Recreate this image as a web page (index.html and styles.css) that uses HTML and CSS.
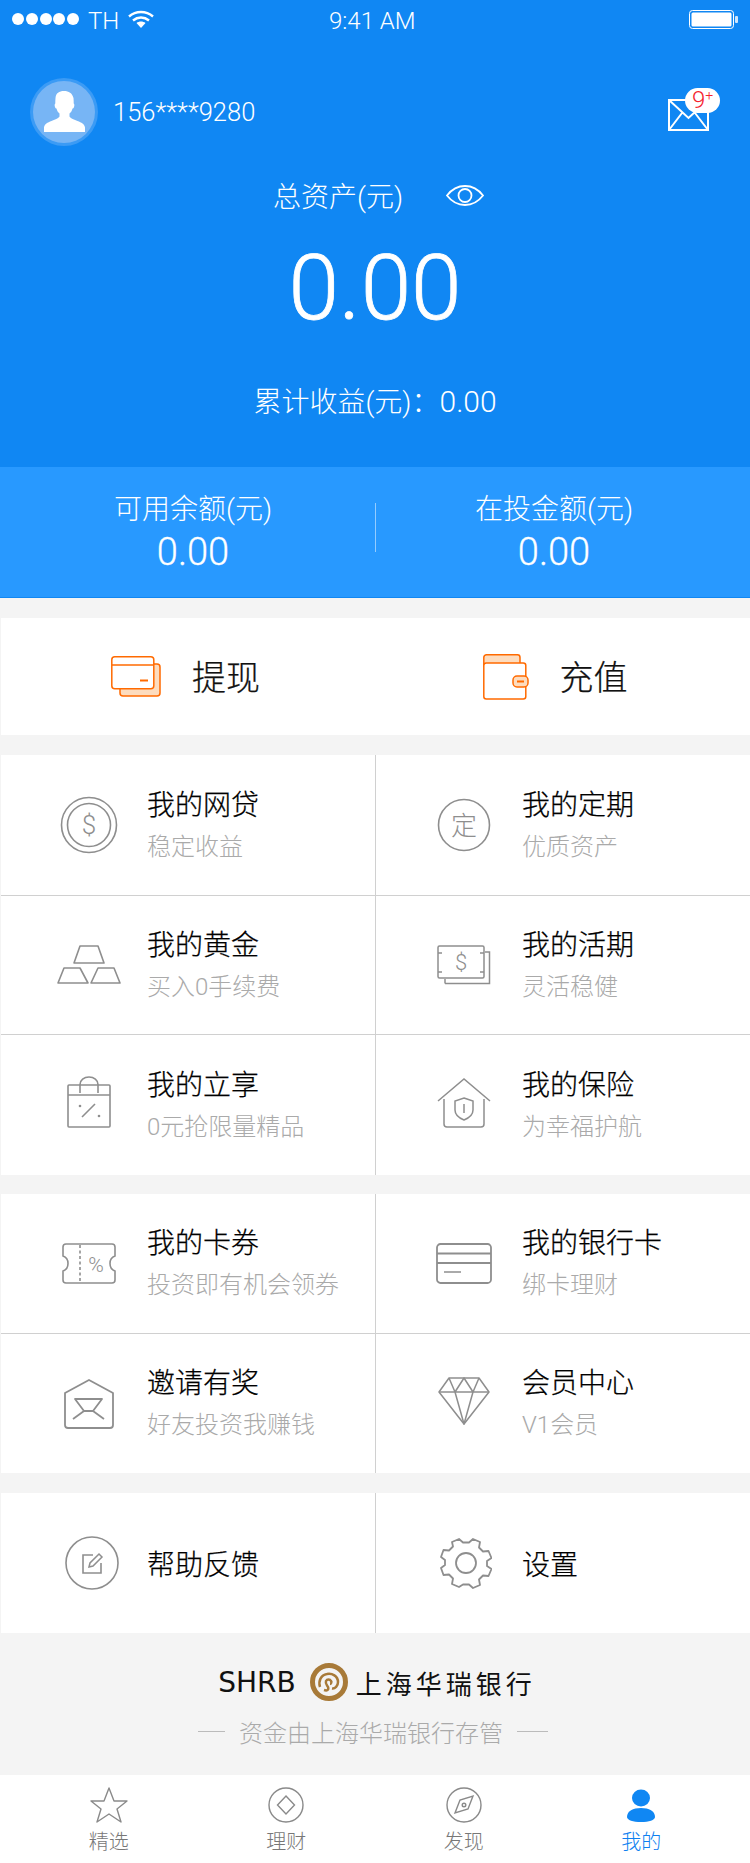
FILE: index.html
```html
<!DOCTYPE html>
<html lang="zh-CN">
<head>
    <meta charset="UTF-8">
    <title>我的</title>
    <link rel="stylesheet" href="styles.css">
</head>
<body>
<div class="page">
    <div class="top">
        <div class="status">
            <div class="status-left">
                <span class="dots"><i></i><i></i><i></i><i></i><i></i></span>
                <span class="carrier">TH</span>
                <svg class="wifi" width="26" height="18" viewBox="0 0 26 18" fill="none" stroke="#fff" stroke-width="2.400">
                    <path d="M1 6.500C8 .5 18 .5 25 6.500"/>
                    <path d="M5 10.500c4.800-4 11.200-4 16 0"/>
                    <path d="M13 18l-4.500-5c2.600-2 6.400-2 9 0z" fill="#fff" stroke="none"/>
                </svg>
            </div>
            <span class="clock">9:41 AM</span>
            <svg class="battery" width="49" height="19" viewBox="0 0 49 19" fill="none">
                <rect x=".5" y=".5" width="44" height="18" rx="3" stroke="#fff"/>
                <rect x="2.500" y="2.500" width="40" height="14" rx="1.500" fill="#fff"/>
                <rect x="46" y="6" width="3" height="7" rx="1" fill="#cfe5fb"/>
            </svg>
        </div>
        <div class="user">
            <div class="user-info">
                <svg width="68" height="68" viewBox="0 0 68 68">
                    <circle cx="34" cy="34" r="34" fill="#3b9bf5"/>
                    <circle cx="34" cy="34" r="31" fill="#77b5f5"/>
                    <path d="M34 13c-5 0-8 2-8.500 7-.2 2-.2 4-.2 5.500-.8.500-.8 2-.3 3.500.3 1 1 1.500 1.500 1.500.5 2 1.500 4 3 5v3c-1 2-5 3-8 4.500-4 1.500-7 3-7.500 6.500V54h41v-4.500c-.5-3.500-3.500-5-7.500-6.500-3-1.500-7-2.500-8-4.500v-3c1.500-1 2.500-3 3-5 .5 0 1.200-.5 1.500-1.500.5-1.500.5-3-.3-3.500 0-1.500 0-3.500-.2-5.500C42 15 39 13 34 13z" fill="#fff"/>
                </svg>
                <span class="phone">156****9280</span>
            </div>
            <div class="mail">
                <svg width="41" height="32" viewBox="0 0 41 32" fill="none" stroke="#fff" stroke-width="2">
                    <rect x="1" y="1" width="39" height="30"/>
                    <path d="M1 1l19.500 18L40 1M1 31l13-17M40 31L27 14"/>
                </svg>
                <span class="mail-badge">9<sup>+</sup></span>
            </div>
        </div>
        <div class="total-label">
            <span>总资产(元)</span>
            <svg width="38" height="21" viewBox="0 0 38 21" fill="none" stroke="#fff" stroke-width="1.800">
                <path d="M1 10.500C6 4 12 1 19 1s13 3 18 9.500C32 17 26 20 19 20S6 17 1 10.500z"/>
                <circle cx="19" cy="10.500" r="6.500"/>
            </svg>
        </div>
        <div class="total-num">0.00</div>
        <div class="total-sum">累计收益(元)&#65306;<span>0.00</span></div>
    </div>

    <div class="balance">
        <div class="balance-item">
            <p class="balance-label">可用余额(元)</p>
            <p class="balance-num">0.00</p>
        </div>
        <div class="balance-item">
            <p class="balance-label">在投金额(元)</p>
            <p class="balance-num">0.00</p>
        </div>
    </div>

    <div class="action">
        <div class="action-item">
            <svg width="50" height="41" viewBox="0 0 50 41" stroke="#ff6a00" stroke-width="1.500">
                <rect x="9" y="8" width="40" height="32" rx="3" fill="#fddcbe"/>
                <rect x=".8" y=".8" width="42" height="32" rx="3" fill="#fff"/>
                <path d="M1 9h42" fill="none"/>
                <path d="M29 24.500h8" fill="none" stroke-width="2"/>
            </svg>
            <span>提现</span>
        </div>
        <div class="action-item action-right">
            <svg width="46" height="46" viewBox="0 0 46 46" stroke="#ff6a00" stroke-width="1.500">
                <path d="M.8 12V3.500C.8 2 2 .8 3.500.8h31c1.500 0 2.500 1.200 2.500 2.700V12z" fill="#fddcbe"/>
                <rect x=".8" y="9" width="42" height="36" rx="2.500" fill="#fff"/>
                <rect x="30" y="22" width="15" height="11" rx="4" fill="#fddcbe"/>
                <path d="M34 27.500h7" fill="none" stroke-width="2"/>
            </svg>
            <span>充值</span>
        </div>
    </div>

    <div class="group group-a">
        <div class="cell">
            <div class="cell-icon">
                <svg width="58" height="58" viewBox="0 0 58 58" fill="none" stroke="#8e8e8e" stroke-width="1.600">
                    <circle cx="29" cy="29" r="27.500"/>
                    <circle cx="29" cy="29" r="21.500"/>
                    <text class="svg-text" x="29" y="38" font-size="26">$</text>
                </svg>
            </div>
            <div class="cell-text"><p class="cell-title">我的网贷</p><p class="cell-sub">稳定收益</p></div>
        </div>
        <div class="cell">
            <div class="cell-icon">
                <svg width="54" height="54" viewBox="0 0 54 54" fill="none" stroke="#8e8e8e" stroke-width="1.600">
                    <circle cx="27" cy="27" r="25.500"/>
                    <text class="svg-text" x="27" y="37" font-size="26">定</text>
                </svg>
            </div>
            <div class="cell-text"><p class="cell-title">我的定期</p><p class="cell-sub">优质资产</p></div>
        </div>
        <div class="cell line">
            <div class="cell-icon">
                <svg width="64" height="40" viewBox="0 0 64 40" fill="none" stroke="#8e8e8e" stroke-width="1.600" stroke-linejoin="round">
                    <path d="M17 18l6-17h18l6 17z"/>
                    <path d="M1 38l6-15h16l8 15z"/>
                    <path d="M34 38l7-15h16l6 15z"/>
                </svg>
            </div>
            <div class="cell-text"><p class="cell-title">我的黄金</p><p class="cell-sub">买入0手续费</p></div>
        </div>
        <div class="cell line">
            <div class="cell-icon">
                <svg width="54" height="40" viewBox="0 0 54 40" fill="none" stroke="#8e8e8e" stroke-width="1.500">
                    <rect x="1" y="1" width="46" height="32" rx="1.500"/>
                    <path d="M8 38.500h44.500V7H48M8 34v4.500"/>
                    <path d="M1 8h4M43 8h4M1 27h4M43 27h4" stroke-width="1.500"/>
                    <text class="svg-text" x="24" y="25" font-size="22">$</text>
                </svg>
            </div>
            <div class="cell-text"><p class="cell-title">我的活期</p><p class="cell-sub">灵活稳健</p></div>
        </div>
        <div class="cell line">
            <div class="cell-icon">
                <svg class="lift-3" width="44" height="52" viewBox="0 0 44 52" fill="none" stroke="#8e8e8e" stroke-width="1.600">
                    <rect x="1" y="9" width="42" height="42" rx="1"/>
                    <path d="M1 19h42M13 17V8.500C13 4 17 1 22 1s9 3 9 7.500V17"/>
                    <path d="M15 41l13-13"/>
                    <circle cx="13" cy="30" r="1.300" fill="#8e8e8e" stroke="none"/>
                    <circle cx="32" cy="40" r="1.300" fill="#8e8e8e" stroke="none"/>
                </svg>
            </div>
            <div class="cell-text"><p class="cell-title">我的立享</p><p class="cell-sub">0元抢限量精品</p></div>
        </div>
        <div class="cell line">
            <div class="cell-icon">
                <svg class="lift-2" width="54" height="50" viewBox="0 0 54 50" fill="none" stroke="#8e8e8e" stroke-width="1.500">
                    <path d="M1 23L27 1l26 22"/>
                    <path d="M7 21v25c0 2 1 3 3 3h34c2 0 3-1 3-3V21"/>
                    <path d="M27 20l9 3v9c0 5-4 8-9 10-5-2-9-5-9-10v-9z"/>
                    <path d="M27 26v9"/>
                </svg>
            </div>
            <div class="cell-text"><p class="cell-title">我的保险</p><p class="cell-sub">为幸福护航</p></div>
        </div>
    </div>

    <div class="group group-b">
        <div class="cell">
            <div class="cell-icon">
                <svg width="54" height="41" viewBox="0 0 54 41" fill="none" stroke="#8e8e8e" stroke-width="1.600">
                    <path d="M4 1h46c2 0 3 1 3 3v9c-3 1-5 4-5 7.500s2 6.500 5 7.500v9c0 2-1 3-3 3H4c-2 0-3-1-3-3v-9c3-1 5-4 5-7.500S4 14 1 13V4c0-2 1-3 3-3z"/>
                    <path d="M18 2v38" stroke-dasharray="3 2.500"/>
                    <text class="svg-text" x="34" y="29" font-size="21">%</text>
                </svg>
            </div>
            <div class="cell-text"><p class="cell-title">我的卡券</p><p class="cell-sub">投资即有机会领券</p></div>
        </div>
        <div class="cell">
            <div class="cell-icon">
                <svg width="56" height="41" viewBox="0 0 56 41" fill="none" stroke="#8e8e8e" stroke-width="1.800">
                    <rect x="1" y="1" width="54" height="39" rx="3.500"/>
                    <path d="M1 10.500h54M1 20h54"/>
                    <path d="M8 29h17" stroke-width="1.500"/>
                </svg>
            </div>
            <div class="cell-text"><p class="cell-title">我的银行卡</p><p class="cell-sub">绑卡理财</p></div>
        </div>
        <div class="cell line">
            <div class="cell-icon">
                <svg width="50" height="50" viewBox="0 0 50 50" fill="none" stroke="#8e8e8e" stroke-width="1.800" stroke-linejoin="round">
                    <path d="M1 14L25 1l24 13v32c0 2-1 3-3 3H4c-2 0-3-1-3-3z"/>
                    <path d="M11 20h27l-9 12H20z"/>
                    <path d="M20 32L9 40M29 32l11 8"/>
                </svg>
            </div>
            <div class="cell-text"><p class="cell-title">邀请有奖</p><p class="cell-sub">好友投资我赚钱</p></div>
        </div>
        <div class="cell line">
            <div class="cell-icon">
                <svg class="lift-2" width="52" height="48" viewBox="0 0 52 48" fill="none" stroke="#8e8e8e" stroke-width="1.500" stroke-linejoin="round">
                    <path d="M11 1h30l10 14-25 32L1 15z"/>
                    <path d="M1 15h50M11 1l6 14 9-14 9 14 6-14M17 15l9 32 9-32"/>
                </svg>
            </div>
            <div class="cell-text"><p class="cell-title">会员中心</p><p class="cell-sub">V1会员</p></div>
        </div>
    </div>

    <div class="group group-c">
        <div class="cell">
            <div class="cell-icon">
                <svg class="push-3" width="54" height="54" viewBox="0 0 54 54" fill="none" stroke="#8e8e8e" stroke-width="1.600">
                    <circle cx="27" cy="27" r="26"/>
                    <path d="M28 19H18v18h18V27"/>
                    <path d="M24 31l1-4 9-9 3 3-9 9z" stroke-width="1.500"/>
                </svg>
            </div>
            <div class="cell-text"><p class="cell-title">帮助反馈</p></div>
        </div>
        <div class="cell">
            <div class="cell-icon">
                <svg class="push-1" width="52" height="52" viewBox="0 0 52 52" fill="none" stroke="#8e8e8e" stroke-width="1.800" stroke-linejoin="round">
                    <path d="M19 2l4 3.500h6L33 2l7 3-1 5.500 4 4 5.500-.5 3 7-4.500 3v5l4.500 3-3 7-5.500-.5-4 4 1 5.500-7 3-4-3.500h-6L19 50l-7-3 1-5.500-4-4-5.500.5-2.500-7 4-3v-5l-4-3 2.500-7 5.500.5 4-4L12 5z"/>
                    <circle cx="26" cy="26" r="10"/>
                </svg>
            </div>
            <div class="cell-text"><p class="cell-title">设置</p></div>
        </div>
    </div>

    <div class="bank">
        <div class="bank-logo">
            <span class="bank-en">SHRB</span>
            <svg width="38" height="38" viewBox="0 0 38 38" fill="none" stroke="#a87a38">
                <circle cx="19" cy="19" r="16.500" stroke-width="5"/>
                <path d="M10 24c-2-6 1-12 7-13 5-1 11 2 11 8 0 4-3 7-6 6.500" stroke-width="2.500"/>
                <path d="M14 27c3 1 5 0 4-3-1-2-3-3-2-6 1-2 4-2 5 0 1 1 0 3-1 3" stroke-width="2.500"/>
            </svg>
            <span class="bank-cn">上海华瑞银行</span>
        </div>
        <div class="bank-note">
            <i></i>
            <span>资金由上海华瑞银行存管</span>
            <i class="bank-note-end"></i>
        </div>
    </div>

    <div class="tabs">
        <div class="tab">
            <svg width="38" height="36" viewBox="0 0 38 36" fill="none" stroke="#8a8a8a" stroke-width="1.400" stroke-linejoin="round">
                <path d="M19 1l5 13h13l-10 8 4 13-12-8-12 8 4-13L1 14h13z"/>
            </svg>
            <span>精选</span>
        </div>
        <div class="tab">
            <svg width="38" height="36" viewBox="0 0 38 36" fill="none" stroke="#8a8a8a" stroke-width="1.400">
                <circle cx="19" cy="18" r="17"/>
                <path d="M19 9l8.500 9-8.500 9-8.500-9z"/>
            </svg>
            <span>理财</span>
        </div>
        <div class="tab">
            <svg width="38" height="36" viewBox="0 0 38 36" fill="none" stroke="#8a8a8a" stroke-width="1.400">
                <circle cx="19" cy="18" r="17"/>
                <path d="M28 9l-5 13-13 4 5-13z"/>
                <circle cx="19" cy="18" r="1.800"/>
            </svg>
            <span>发现</span>
        </div>
        <div class="tab tab-on">
            <svg width="38" height="36" viewBox="0 0 38 36" fill="#1087f3">
                <ellipse cx="19" cy="11" rx="9" ry="8.500"/>
                <path d="M5 30c0-6 6-9 14-9s14 3 14 9c0 3-6 5-14 5S5 33 5 30z"/>
            </svg>
            <span>我的</span>
        </div>
    </div>
</div>
</body>
</html>
```

FILE: styles.css
```css
*{
    margin: 0;
    padding: 0;
    box-sizing: border-box;
}
body{
    background: #f4f4f4;
    font-family: Roboto, "Noto Sans CJK SC", sans-serif;
    font-weight: 300;
}
i{
    font-style: normal;
}
svg{
    display: block;
}
.page{
    width: 750px;
    height: 1863px;
    overflow: hidden;
}

/* top blue */
.top{
    height: 467px;
    padding-top: 10px;
    background: #1087f3;
    color: #fff;
}
.status{
    display: flex;
    justify-content: space-between;
    align-items: center;
    position: relative;
    height: 22px;
    padding: 0 12px;
}
.status-left{
    display: flex;
    align-items: center;
}
.dots{
    display: flex;
    gap: 1.750px;
    margin-right: 9px;
    margin-bottom: 4px;
}
.dots i{
    width: 12px;
    height: 12px;
    border-radius: 50%;
    background: #fff;
}
.carrier{
    margin-right: 9px;
    font-size: 24px;
}
.wifi{
    margin-bottom: 4px;
}
.battery{
    margin-bottom: 3px;
}
.clock{
    position: absolute;
    left: 329px;
    top: -2px;
    font-size: 24px;
    line-height: 26px;
}
.user{
    display: flex;
    justify-content: space-between;
    align-items: center;
    height: 68px;
    margin-top: 46px;
    padding: 0 30px;
}
.user-info{
    display: flex;
    align-items: center;
    gap: 15px;
}
.phone{
    font-size: 25.500px;
}
.mail{
    position: relative;
    margin-top: 6px;
    margin-right: 11px;
}
.mail-badge{
    position: absolute;
    left: 17px;
    top: -11px;
    width: 35px;
    height: 25px;
    border-radius: 13px;
    background: #fff;
    color: #f5222d;
    font-size: 24px;
    line-height: 25px;
    text-align: center;
}
.mail-badge sup{
    font-size: 14px;
    line-height: 0;
    vertical-align: 8px;
}
.total-label{
    display: flex;
    justify-content: center;
    align-items: center;
    gap: 43px;
    height: 40px;
    margin-top: 29px;
    padding-left: 7px;
    font-size: 28px;
}
.total-num{
    height: 100px;
    margin-top: 23px;
    font-size: 91px;
    line-height: 100px;
    text-align: center;
    -webkit-text-stroke: .8px #fff;
}
.total-sum{
    margin-top: 44px;
    font-size: 28px;
    line-height: 40px;
    text-align: center;
}
.total-sum span{
    font-size: 30px;
}

/* balance band */
.balance{
    display: flex;
    position: relative;
    height: 131px;
    padding-top: 24px;
    background: #2899ff;
    border-bottom: 1px solid #1087f3;
    color: #fff;
}
.balance:after{
    content: "";
    position: absolute;
    left: 375px;
    top: 36px;
    width: 1px;
    height: 49px;
    background: rgba(255,255,255,.5);
}
.balance-item{
    width: 50%;
    padding-left: 11px;
    text-align: center;
}
.balance-item:last-child{
    padding-left: 0;
    padding-right: 17px;
}
.balance-label{
    font-size: 28px;
    line-height: 38px;
}
.balance-num{
    font-size: 38px;
    line-height: 46px;
    -webkit-text-stroke: .3px #fff;
}

/* withdraw, recharge */
.action{
    display: flex;
    height: 117px;
    margin: 20px 0 20px 1px;
    background: #fff;
    color: #111;
    font-size: 34px;
    -webkit-text-stroke: .25px #111;
}
.action-item{
    display: flex;
    align-items: center;
    gap: 31px;
    width: 375px;
    padding-left: 110px;
}
.action-item span{
    margin-bottom: 2px;
}
.action-right{
    padding-left: 107px;
}

/* menu groups */
.group{
    display: grid;
    grid-template-columns: 375px 374px;
    margin-left: 1px;
    background: #fff;
}
.group-a{
    grid-template-rows: 140px 139px 141px;
    margin-bottom: 19px;
}
.group-b{
    grid-template-rows: 139px 140px;
    margin-bottom: 20px;
}
.group-c{
    grid-template-rows: 140px;
}
.cell{
    display: flex;
    align-items: center;
    padding-left: 30px;
}
.cell:nth-child(odd){
    border-right: 1px solid #d0d0d0;
}
.line{
    border-top: 1px solid #d0d0d0;
}
.cell-icon{
    display: flex;
    justify-content: center;
    width: 116px;
}
.lift-2{
    margin-bottom: 5px;
}
.lift-3{
    margin-bottom: 6px;
}
.push-1{
    margin-left: 3px;
}
.push-3{
    margin-left: 6px;
}
.svg-text{
    fill: #8e8e8e;
    stroke: none;
    text-anchor: middle;
    font-family: Roboto, "Noto Sans CJK SC", sans-serif;
    font-weight: 300;
}
.cell-text{
    padding-top: 2px;
}
.cell-title{
    color: #000;
    font-size: 28px;
    line-height: 42px;
    -webkit-text-stroke: .25px #000;
}
.cell-sub{
    color: #aaa;
    font-size: 24px;
    line-height: 41px;
}
.group-c .cell-text{
    padding-top: 5px;
}

/* bank */
.bank{
    height: 142px;
    padding-top: 30px;
    text-align: center;
}
.bank-logo{
    display: flex;
    justify-content: center;
    align-items: center;
    height: 38px;
}
.bank-en{
    margin-right: 14px;
    color: #111;
    font-family: "DejaVu Sans", sans-serif;
    font-size: 28px;
    font-weight: 400;
}
.bank-cn{
    margin-left: 8px;
    margin-right: -4px;
    color: #111;
    font-size: 26px;
    font-weight: 400;
    letter-spacing: 4px;
}
.bank-note{
    display: flex;
    justify-content: center;
    align-items: center;
    gap: 14px;
    height: 36px;
    margin-top: 12px;
    padding-right: 4px;
    color: #aaa;
    font-size: 24px;
}
.bank-note i{
    width: 27px;
    height: 1px;
    background: #bbb;
}
.bank-note .bank-note-end{
    width: 31px;
}

/* tabs */
.tabs{
    display: flex;
    height: 88px;
    padding: 12px 20px 0;
    background: #fff;
}
.tab{
    display: flex;
    flex-direction: column;
    align-items: center;
    width: 178px;
    color: #777;
    font-size: 20px;
    line-height: 28px;
}
.tab span{
    margin-top: 5px;
}
.tab-on{
    color: #0d7ff0;
}
```
